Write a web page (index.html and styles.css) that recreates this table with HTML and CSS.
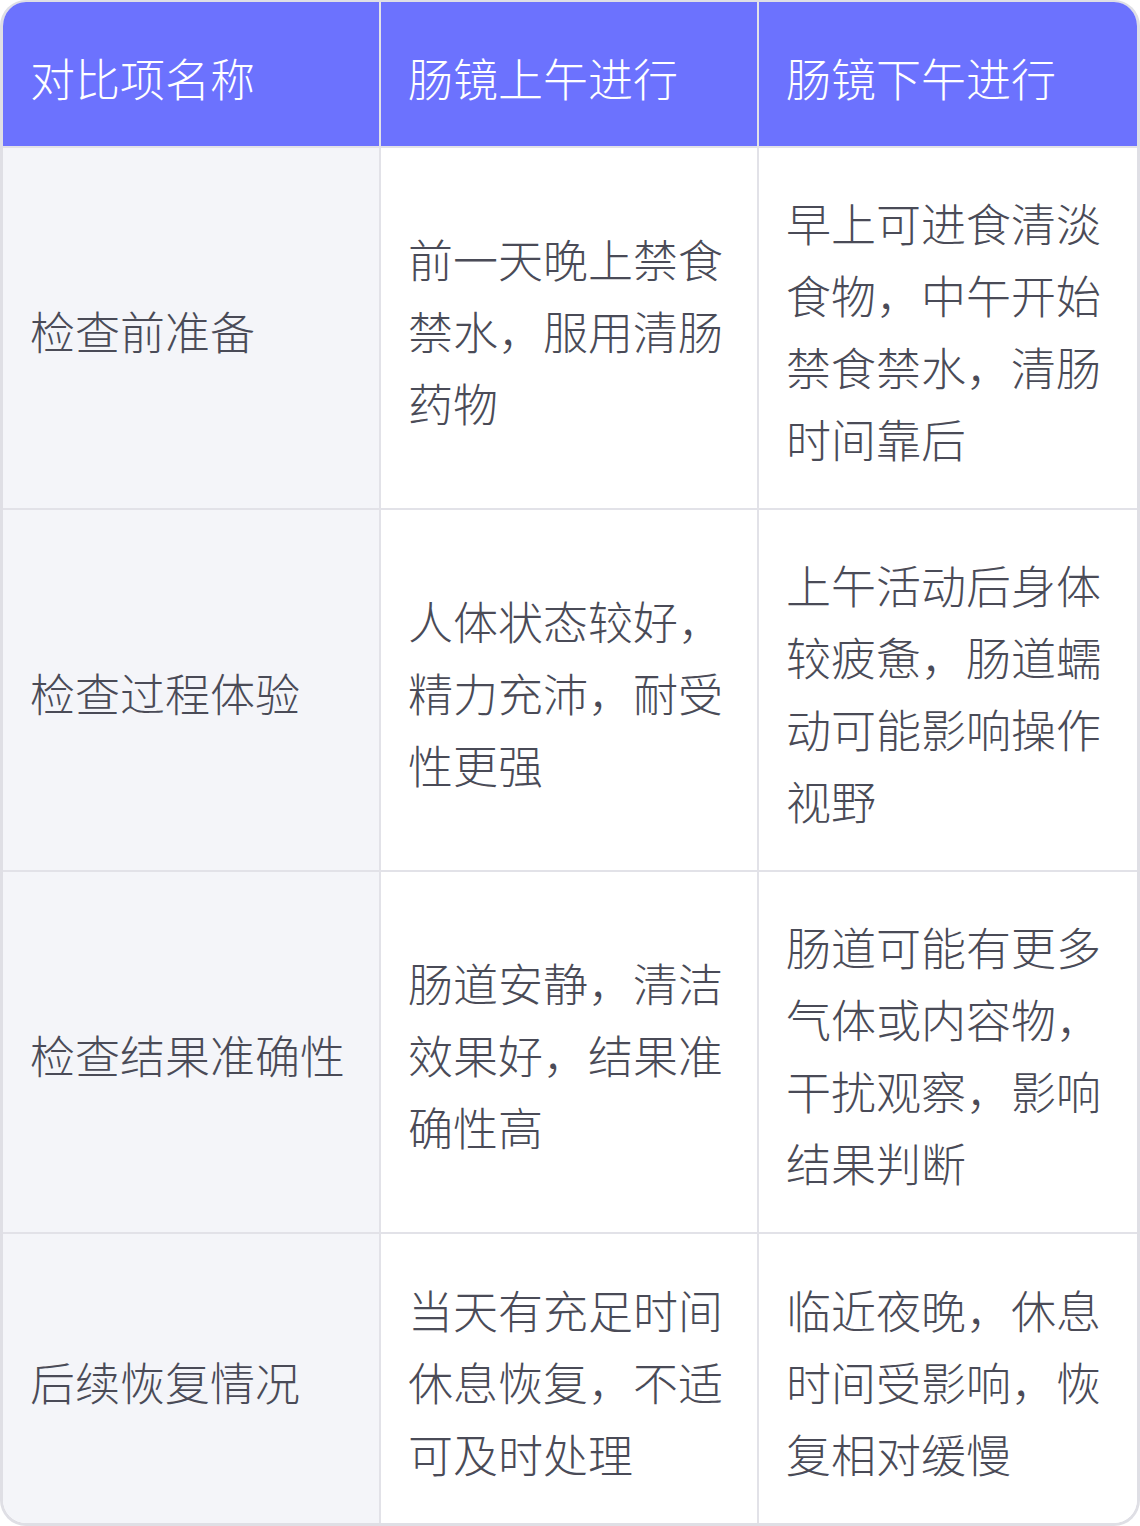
FILE: index.html
```html
<!DOCTYPE html>
<html lang="zh-CN">
<head>
<meta charset="utf-8">
<link rel="stylesheet" href="styles.css">
</head>
<body>
<div class="table">
  <div class="cell head">对比项名称</div>
  <div class="cell head">肠镜上午进行</div>
  <div class="cell head last">肠镜下午进行</div>

  <div class="cell label">检查前准备</div>
  <div class="cell">前一天晚上禁食禁水，服用清肠药物</div>
  <div class="cell last">早上可进食清淡食物，中午开始禁食禁水，清肠时间靠后</div>

  <div class="cell label">检查过程体验</div>
  <div class="cell">人体状态较好，精力充沛，耐受性更强</div>
  <div class="cell last">上午活动后身体较疲惫，肠道蠕动可能影响操作视野</div>

  <div class="cell label">检查结果准确性</div>
  <div class="cell">肠道安静，清洁效果好，结果准确性高</div>
  <div class="cell last">肠道可能有更多气体或内容物，干扰观察，影响结果判断</div>

  <div class="cell label bottom">后续恢复情况</div>
  <div class="cell bottom">当天有充足时间休息恢复，不适可及时处理</div>
  <div class="cell last bottom">临近夜晚，休息时间受影响，恢复相对缓慢</div>
</div>
</body>
</html>
```

FILE: styles.css
```css
html, body {
  margin: 0;
  padding: 0;
  background: #ffffff;
}
body {
  font-family: "Noto Sans CJK SC", "Noto Sans", sans-serif;
  font-weight: 300;
}
.table {
  box-sizing: border-box;
  width: 1140px;
  height: 1526px;
  border: 3px solid #dfdfe5;
  border-top-width: 2px;
  border-radius: 26px;
  overflow: hidden;
  display: grid;
  grid-template-columns: 1fr 1fr 1fr;
  grid-template-rows: 146px 362px 362px 362px 1fr;
  background: #ffffff;
}
.cell {
  box-sizing: border-box;
  padding: 6px 30px 0 27px;
  display: flex;
  align-items: center;
  font-size: 45px;
  line-height: 72px;
  color: #4a4b57;
  border-right: 2px solid #e2e2e8;
  border-bottom: 2px solid #e2e2e8;
  background: #ffffff;
}
.cell.last {
  border-right: none;
}
.cell.bottom {
  border-bottom: none;
}
.cell.head {
  background: #6c72fe;
  color: #ffffff;
  padding-top: 8px;
}
.cell.label {
  background: #f4f5f9;
}
```
